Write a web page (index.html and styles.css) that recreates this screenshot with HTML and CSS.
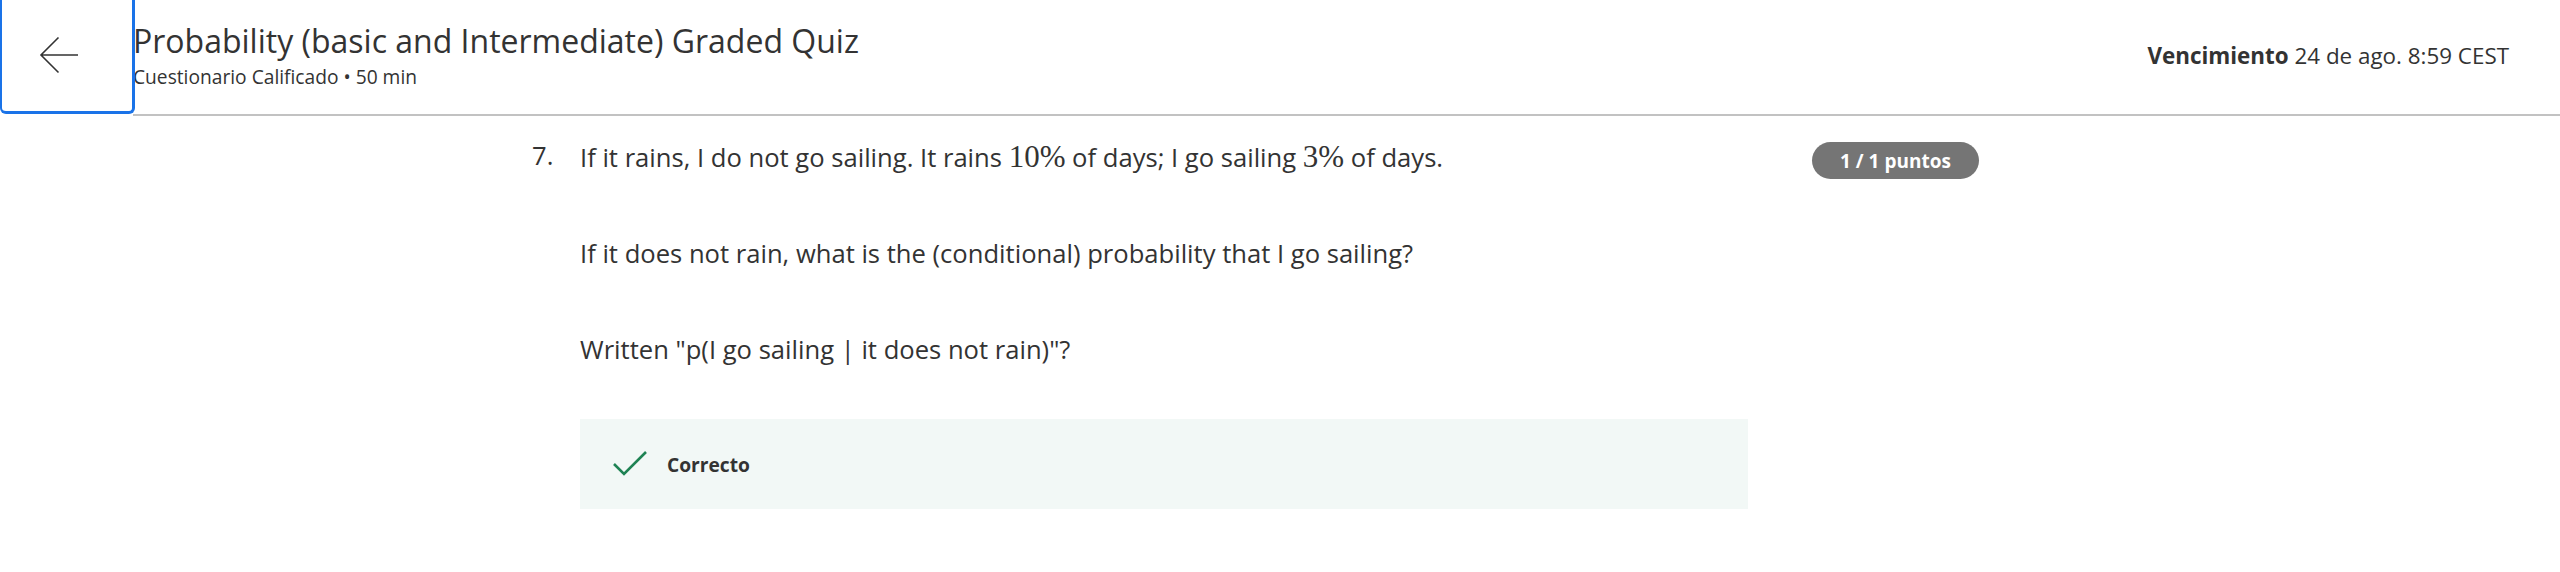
FILE: index.html
```html
<!DOCTYPE html>
<html lang="es">
<head>
<meta charset="utf-8">
<title>Probability Graded Quiz</title>
<link rel="stylesheet" href="styles.css">
</head>
<body>
<header class="topbar">
  <button class="back" aria-label="Volver">
    <svg width="40" height="38" viewBox="0 0 40 38" fill="none" stroke="#333" stroke-width="1.6">
      <path d="M39 19 H2 M19.5 1.5 L2 19 L19.5 36.5"/>
    </svg>
  </button>
  <div class="bar">
    <div class="titles">
      <h1 class="title">Probability (basic and Intermediate) Graded Quiz</h1>
      <div class="subtitle">Cuestionario Calificado • 50 min</div>
    </div>
    <div class="due"><strong>Vencimiento</strong> 24 de ago. 8:59 CEST</div>
  </div>
</header>
<main class="content">
  <div class="question">
    <div class="num">7.</div>
    <div class="body">
      <p class="para">If it rains, I do not go sailing. It rains <span class="math">10%</span> of days; I go sailing <span class="math">3%</span> of days.</p>
      <p class="para">If it does not rain, what is the (conditional) probability that I go sailing?</p>
      <p class="para">Written "p(I go sailing | it does not rain)"?</p>
      <div class="result">
        <svg class="check" width="34" height="26" viewBox="0 0 34 26" fill="none" stroke="#1f8354" stroke-width="2.6">
          <path d="M1 13 L11 23 L33 1"/>
        </svg>
        <span class="result-label">Correcto</span>
      </div>
    </div>
    <div class="badge">1 / 1 puntos</div>
  </div>
</main>
</body>
</html>
```
FILE: styles.css
```css
* { box-sizing: border-box; }
html, body { margin: 0; padding: 0; background: #fff; }
body { font-family: "Open Sans", "Noto Sans", sans-serif; color: #333; }

.topbar { display: flex; height: 116px; }

.back {
  position: relative;
  z-index: 1;
  width: 135px;
  height: 114px;
  flex: none;
  background: transparent;
  border: 3px solid #1a73e8;
  border-left-width: 2px;
  border-top: 0;
  border-radius: 0 0 6px 6px;
  display: flex;
  align-items: center;
  justify-content: center;
  padding: 0 16px 2px 0;
  margin: 0;
  cursor: pointer;
}

.bar {
  flex: 1;
  display: flex;
  justify-content: space-between;
  align-items: center;
  border-bottom: 2px solid #c2c2c2;
  margin-left: -2px;
  padding-right: 51px;
}

.titles { align-self: flex-start; padding-top: 21px; }
.title { margin: 0; font-size: 32px; line-height: 40px; font-weight: 400; color: #333; }
.subtitle { margin-top: 4px; font-size: 19.2px; line-height: 24px; color: #333; }

.due { font-size: 22.4px; line-height: 30px; color: #333; margin-bottom: 3px; }
.due strong { font-weight: 700; }

.content { padding: 23px 0 0 532px; }
.question { display: flex; align-items: flex-start; }
.num { width: 48px; flex: none; font-size: 25.6px; line-height: 38.4px; margin-top: -2px; }
.body { width: 1168px; flex: none; }
.para { margin: 0 0 57.6px; font-size: 25.6px; line-height: 38.4px; }
.para:last-of-type { margin-bottom: 50px; }
.math { font-family: "Liberation Serif", "DejaVu Serif", serif; font-size: 31px; line-height: 1; }

.result {
  height: 90px;
  background: #f2f8f6;
  display: flex;
  align-items: center;
  gap: 20px;
  padding-left: 33px;
}
.result-label { font-size: 19.2px; font-weight: 700; color: #333; }

.badge {
  margin-left: 64px;
  margin-top: 3px;
  height: 37px;
  padding: 0 28px;
  border-radius: 19px;
  background: #757575;
  color: #fff;
  font-size: 19px;
  font-weight: 700;
  display: flex;
  align-items: center;
  white-space: nowrap;
}
```
